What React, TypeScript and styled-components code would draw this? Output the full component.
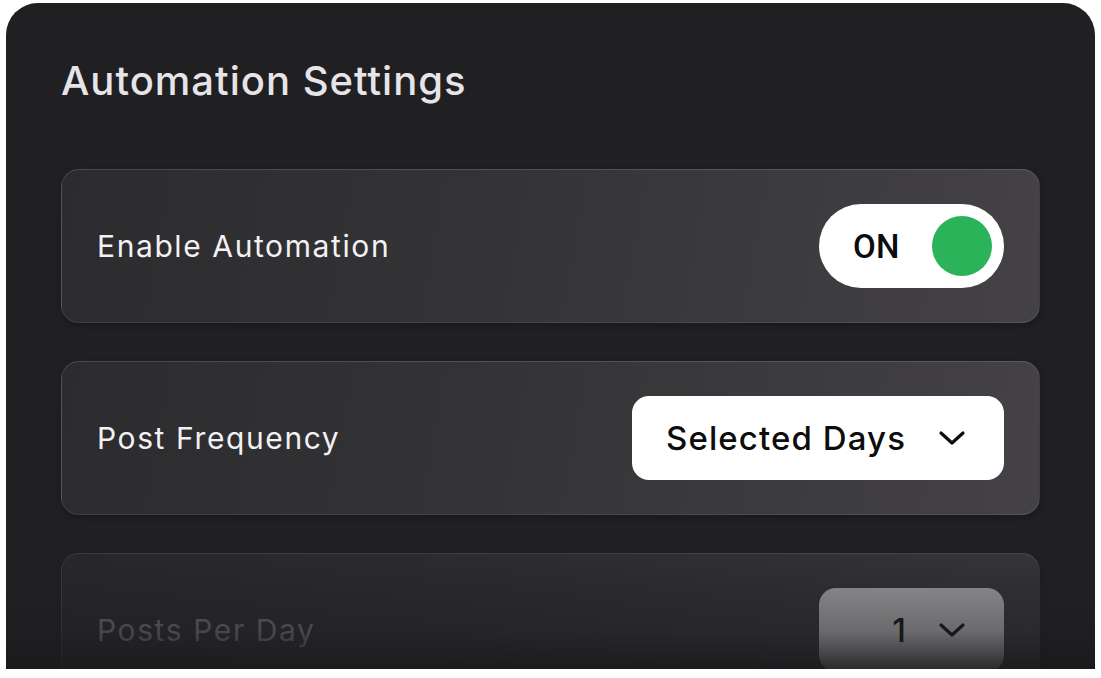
import React from "react";
import styled, { createGlobalStyle } from "styled-components";

const Global = createGlobalStyle`
  html, body { margin: 0; padding: 0; background: #ffffff; }
  body { font-family: Inter, "Noto Sans", sans-serif; }
  #root { padding: 3px 6px 0 6px; }
`;

const Panel = styled.div`
  position: relative;
  width: 1089px;
  height: 666px;
  background: #201f22;
  border-radius: 32px 32px 0 0;
  overflow: hidden;
  padding: 54px 55px 0 55px;
  box-sizing: border-box;
  display: flex;
  flex-direction: column;
`;

const Title = styled.h1`
  margin: 0 0 64px 0;
  font-family: Inter, sans-serif;
  font-weight: 500;
  font-size: 40px;
  line-height: 48px;
  color: #e6e4e8;
  letter-spacing: 1px;
`;

const List = styled.div`
  display: flex;
  flex-direction: column;
  gap: 38px;
`;

const Card = styled.div`
  height: 154px;
  flex-shrink: 0;
  box-sizing: border-box;
  border-radius: 18px;
  border: 1.5px solid rgba(255, 255, 255, 0.09);
  border-top-color: rgba(255, 255, 255, 0.14);
  background: linear-gradient(100deg, #2c2b2e 0%, #343336 45%, #444246 100%);
  display: flex;
  align-items: center;
  justify-content: space-between;
  padding: 0 35px 0 35px;
  box-shadow: 0 2px 6px rgba(0, 0, 0, 0.25);
`;

const Label = styled.span<{ $dim?: boolean }>`
  font-family: Inter, sans-serif;
  font-size: 30px;
  font-weight: 400;
  color: ${(p) => (p.$dim ? "#9a999e" : "#f2f1f4")};
  letter-spacing: 1.6px;
`;

const Toggle = styled.div`
  width: 185px;
  height: 84px;
  box-sizing: border-box;
  border-radius: 42px;
  background: #ffffff;
  display: flex;
  align-items: center;
  justify-content: space-between;
  padding: 0 12px 0 34px;
`;

const ToggleText = styled.span`
  font-family: Roboto, "Liberation Sans", sans-serif;
  font-size: 33px;
  font-weight: 500;
  color: #0c0c0c;
  letter-spacing: 0.3px;
`;

const Knob = styled.span`
  width: 60px;
  height: 60px;
  border-radius: 50%;
  background: #2bb35a;
`;

const Select = styled.div<{ $w: number }>`
  width: ${(p) => p.$w}px;
  height: 84px;
  box-sizing: border-box;
  border-radius: 17px;
  background: #ffffff;
  display: flex;
  align-items: center;
  justify-content: space-between;
  padding: 0 38px 0 34px;
`;

const SelectText = styled.span`
  font-family: Inter, sans-serif;
  font-size: 33px;
  font-weight: 500;
  color: #0d0d0d;
  letter-spacing: 1.1px;
`;

const NumText = styled.span`
  font-family: Inter, sans-serif;
  font-size: 33px;
  font-weight: 500;
  color: #0d0d0d;
  margin-left: auto;
  margin-right: 32px;
`;

const Fade = styled.div`
  position: absolute;
  left: 0;
  right: 0;
  top: 540px;
  bottom: 0;
  pointer-events: none;
  background: linear-gradient(
    to bottom,
    rgba(32, 31, 34, 0.3) 0%,
    rgba(32, 31, 34, 0.55) 35%,
    rgba(30, 29, 32, 0.66) 70%,
    rgba(26, 25, 28, 0.92) 100%
  );
`;

const Chevron = () => (
  <svg width="28" height="16" viewBox="0 0 28 16" fill="none">
    <path d="M3 3l11 10L25 3" stroke="#0d0d0d" strokeWidth="3.2" strokeLinecap="round" strokeLinejoin="round" />
  </svg>
);

export default function App() {
  return (
    <>
      <Global />
      <Panel>
        <Title>Automation Settings</Title>
        <List>
          <Card>
            <Label>Enable Automation</Label>
            <Toggle>
              <ToggleText>ON</ToggleText>
              <Knob />
            </Toggle>
          </Card>
          <Card>
            <Label>Post Frequency</Label>
            <Select $w={372}>
              <SelectText>Selected Days</SelectText>
              <Chevron />
            </Select>
          </Card>
          <Card>
            <Label $dim>Posts Per Day</Label>
            <Select $w={185}>
              <NumText>1</NumText>
              <Chevron />
            </Select>
          </Card>
        </List>
        <Fade />
      </Panel>
    </>
  );
}
